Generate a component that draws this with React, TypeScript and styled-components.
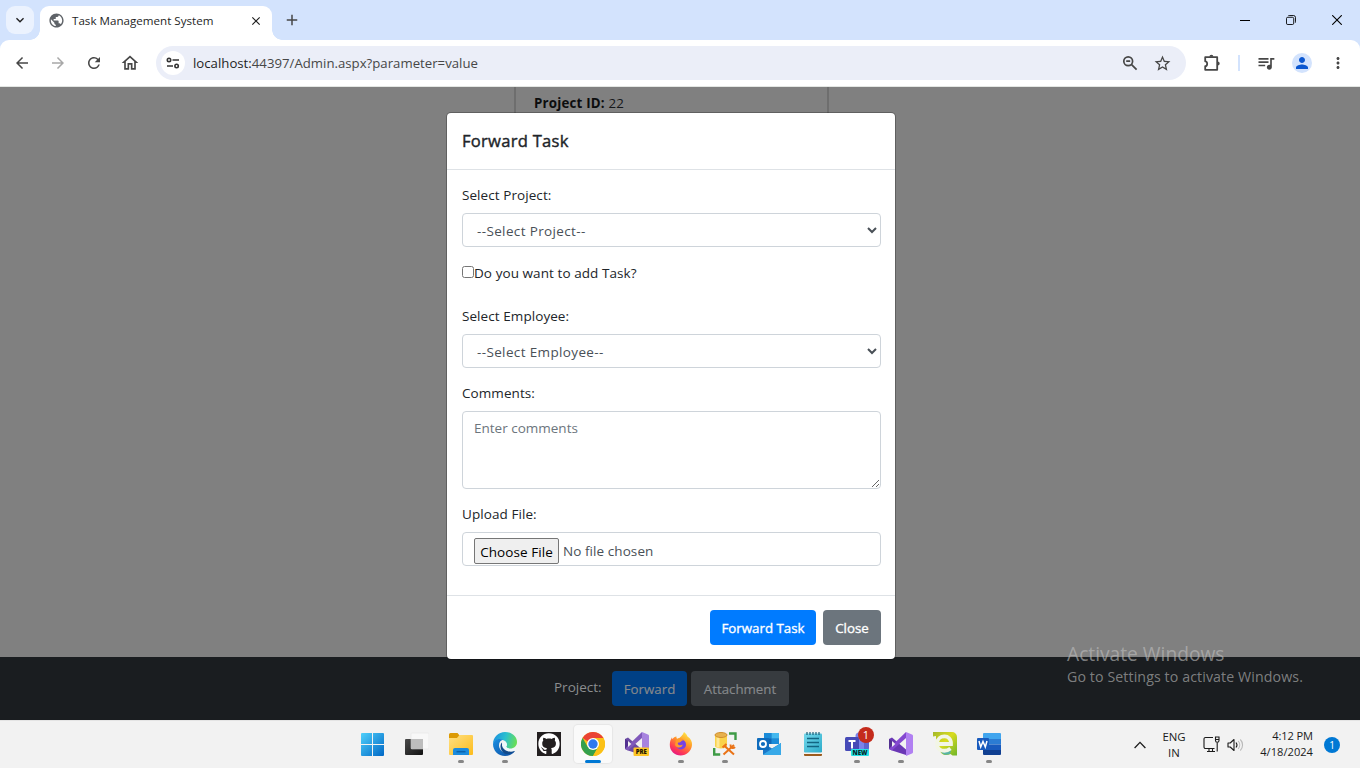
import React from "react";
import styled, { createGlobalStyle } from "styled-components";
import {
  MdAdd,
  MdArrowBack,
  MdArrowForward,
  MdClose,
  MdKeyboardArrowDown,
  MdMoreVert,
  MdOutlineHome,
  MdPerson,
  MdPublic,
  MdQueueMusic,
  MdRefresh,
  MdStarOutline,
} from "react-icons/md";
import { FaGithub } from "react-icons/fa";

const Global = createGlobalStyle`
  *, *::before, *::after { box-sizing: border-box; }
  body { margin: 0; overflow: hidden; font-family: "Open Sans", "Noto Sans", sans-serif; font-size: 13.5px; color: #212529; }
  svg { display: block; flex: none; }
  button, select, textarea, input { font: inherit; letter-spacing: inherit; margin: 0; }
`;

const Screen = styled.div`
  width: 1360px;
  height: 768px;
  display: flex;
  flex-direction: column;
  overflow: hidden;
  white-space: nowrap;
  background: #d3e3fd;
`;

/* ---------- browser ---------- */

const TabStrip = styled.div`
  height: 40px;
  flex: none;
  display: flex;
  align-items: flex-end;
  padding-left: 6px;
`;

const TabSearch = styled.div`
  width: 28px;
  height: 28px;
  margin: 0 6px 6px 0;
  border-radius: 9px;
  background: #ebf2fe;
  display: grid;
  place-items: center;
`;

const Tab = styled.div`
  position: relative;
  width: 232px;
  height: 34px;
  padding: 0 9px 5px 8px;
  border-radius: 9px 9px 0 0;
  background: #fff;
  display: flex;
  align-items: center;
  &::before,
  &::after {
    content: "";
    position: absolute;
    bottom: 0;
    width: 10px;
    height: 10px;
  }
  &::before {
    left: -10px;
    background: radial-gradient(circle at 0 0, transparent 9.5px, #fff 10px);
  }
  &::after {
    right: -10px;
    background: radial-gradient(circle at 100% 0, transparent 9.5px, #fff 10px);
  }
`;

const TabTitle = styled.span`
  flex: 1;
  margin-left: 7px;
  font-size: 11.6px;
  letter-spacing: 0.01px;
  color: #1f1f1f;
`;

const NewTab = styled.div`
  margin: 0 auto 11px 11px;
`;

const WindowButtons = styled.div`
  display: flex;
  height: 40px;
`;

const WindowButton = styled.div`
  width: 46px;
  height: 40px;
  display: grid;
  place-items: center;
`;

const Toolbar = styled.div`
  height: 46px;
  flex: none;
  display: flex;
  align-items: center;
  padding: 0 4px;
  border-radius: 9px 9px 0 0;
  background: #fff;
  color: #474747;
`;

const ToolButton = styled.div<{ $faded?: boolean }>`
  width: 36px;
  height: 34px;
  flex: none;
  display: grid;
  place-items: center;
  color: ${(p) => (p.$faded ? "#a8a8a8" : "#474747")};
`;

const AddressBar = styled.div`
  width: 1030px;
  height: 34px;
  flex: none;
  margin: 0 8px;
  padding: 0 8px 0 5px;
  border-radius: 17px;
  background: #ebeef8;
  display: flex;
  align-items: center;
`;

const SiteInfo = styled.div`
  width: 24px;
  height: 24px;
  border-radius: 50%;
  background: #fff;
  display: grid;
  place-items: center;
`;

const Url = styled.span`
  flex: 1;
  margin-left: 8px;
  font-size: 13.2px;
  letter-spacing: 0.01px;
  color: #474747;
  b {
    font-weight: 400;
    color: #1f1f1f;
  }
`;

const AddressAction = styled.div`
  width: 32px;
  display: grid;
  place-items: center;
`;

const Separator = styled.div`
  width: 2px;
  height: 16px;
  flex: none;
  margin: 0 8px;
  background: #d3e3fd;
`;

const Avatar = styled.div`
  width: 20px;
  height: 20px;
  border-radius: 50%;
  background: #d3e3fd;
  color: #0b57d0;
  display: grid;
  place-items: center;
`;

/* ---------- page ---------- */

const Page = styled.div`
  position: relative;
  flex: 1;
  display: flex;
  flex-direction: column;
  border-top: 1px solid #e3e6e3;
  background: #808080;
`;

const PageBody = styled.div`
  flex: 1;
`;

const ProjectCard = styled.div`
  width: 315px;
  height: 100%;
  margin-left: 514px;
  padding: 6px 18px;
  border: solid #6e6e6e;
  border-width: 0 2px;
  color: #15171a;
  line-height: 20px;
  font-size: 13.3px;
  letter-spacing: 0.2px;
  b {
    font-weight: 700;
    color: #0c0d0e;
  }
`;

const PageFooter = styled.div`
  height: 63px;
  flex: none;
  display: flex;
  align-items: flex-start;
  padding: 14px 0 0 554px;
  background: #1a1d20;
  color: #8b8d8f;
`;

const FooterLabel = styled.span`
  width: 58px;
  line-height: 32px;
`;

const tones = {
  primary: ["#007bff", "#fff"],
  secondary: ["#6c757d", "#fff"],
  dimPrimary: ["#004085", "#85888b"],
  dimSecondary: ["#373b3f", "#85888b"],
};

const Button = styled.button<{ $tone: keyof typeof tones; $width: number }>`
  width: ${(p) => p.$width}px;
  height: 35px;
  padding: 1px 0 0;
  border: 0;
  border-radius: 4px;
  font-size: 13.3px;
  -webkit-text-stroke: ${(p) => (p.$tone.startsWith("dim") ? 0.15 : 0.35)}px;
  background: ${(p) => tones[p.$tone][0]};
  color: ${(p) => tones[p.$tone][1]};
  text-align: center;
`;

const ButtonRow = styled.div<{ $gap: number }>`
  display: flex;
  gap: ${(p) => p.$gap}px;
`;

const Backdrop = styled.div`
  position: absolute;
  inset: 0;
  display: flex;
  justify-content: center;
  align-items: flex-start;
  padding: 26px 18px 0 0;
`;

const Modal = styled.div`
  width: 448px;
  height: 546px;
  display: flex;
  flex-direction: column;
  border-radius: 4px;
  background: #fff;
  box-shadow: 0 0 0 1px rgba(0, 0, 0, 0.25);
`;

const ModalHeader = styled.div`
  height: 57px;
  padding: 0 15px;
  border-bottom: 1px solid #dee2e6;
  font-size: 16.6px;
  letter-spacing: 0.25px;
  -webkit-text-stroke: 0.4px;
  line-height: 56px;
`;

const ModalBody = styled.div`
  flex: 1;
  padding: 14px 14px 0 15px;
  display: flex;
  flex-direction: column;
  letter-spacing: 0.07px;
`;

const ModalFooter = styled.div`
  height: 64px;
  padding: 14px 14px 0 0;
  border-top: 1px solid #dee2e6;
  display: flex;
  justify-content: flex-end;
`;

const Field = styled.label`
  display: flex;
  flex-direction: column;
  margin-bottom: 14px;
  line-height: 22px;
`;

const FieldLabel = styled.span`
  height: 29px;
`;

const Select = styled.select`
  height: 34px;
  padding: 1px 1px 0 10px;
  border: 1px solid #ced4da;
  border-radius: 4px;
  background: #fff;
  color: #495057;
  letter-spacing: 0.36px;
`;

const TextArea = styled.textarea`
  height: 78px;
  padding: 5px 11px;
  border: 1px solid #ced4da;
  border-radius: 4px;
  line-height: 22px;
  letter-spacing: 0;
  outline: 0;
  &::placeholder {
    color: #6c757d;
  }
`;

const FileInput = styled.div`
  height: 34px;
  padding: 5px 11px;
  border: 1px solid #ced4da;
  border-radius: 4px;
  display: flex;
  gap: 4px;
  color: #495057;
  line-height: 26px;
`;

const ChooseFile = styled.button`
  width: 85px;
  height: 26px;
  padding: 0 0 2px;
  border: 1px solid #767676;
  border-radius: 2px;
  background: #efefef;
  color: #000;
`;

const CheckRow = styled.label`
  height: 44px;
  display: flex;
  align-items: flex-start;
  line-height: 25px;
`;

const Checkbox = styled.input`
  width: 12px;
  height: 12px;
  margin: 5px 0 0;
`;

const Watermark = styled.div`
  position: absolute;
  left: 1067px;
  top: 554px;
  color: rgba(190, 190, 190, 0.62);
`;

const WatermarkTitle = styled.div`
  font-size: 19.2px;
  line-height: 25px;
`;

const WatermarkText = styled.div`
  font-size: 14.2px;
  letter-spacing: 0.1px;
  line-height: 22px;
`;

/* ---------- taskbar ---------- */

const Taskbar = styled.div`
  height: 48px;
  flex: none;
  display: flex;
  justify-content: space-between;
  padding-left: 351px;
  border-top: 1px solid #e4e4e4;
  background: #f2f2f2;
  color: #1b1b1b;
`;

const Apps = styled.div`
  display: flex;
`;

const TaskButton = styled.div<{ $state?: "open" | "active" }>`
  position: relative;
  width: 38px;
  height: 38px;
  margin: 4px 3px;
  border-radius: 4px;
  display: grid;
  place-items: center;
  background: ${(p) => (p.$state === "active" ? "#fafafa" : "transparent")};
  box-shadow: ${(p) => (p.$state === "active" ? "0 0 1px 1px #e6e6e6" : "none")};
  &::after {
    content: "";
    position: absolute;
    bottom: 0;
    left: 50%;
    width: ${(p) => (p.$state === "active" ? 16 : 6)}px;
    height: 3px;
    border-radius: 2px;
    transform: translateX(-50%);
    display: ${(p) => (p.$state ? "block" : "none")};
    background: ${(p) => (p.$state === "active" ? "#0078d4" : "#868686")};
  }
`;

const CountBadge = styled.span`
  position: absolute;
  left: 20px;
  top: 2px;
  width: 16px;
  height: 16px;
  border-radius: 50%;
  background: #c42b1c;
  color: #fff;
  font-size: 11px;
  line-height: 15px;
  text-align: center;
`;

const Tray = styled.div`
  display: flex;
  align-items: center;
  padding-right: 20px;
`;

const Language = styled.div`
  width: 30px;
  margin: 0 14px 0 13px;
  font-size: 11.4px;
  line-height: 16px;
  text-align: center;
`;

const Clock = styled.div`
  width: 64px;
  margin: 0 11px 2px 5px;
  font-size: 11.1px;
  line-height: 16px;
  letter-spacing: 0.03px;
  display: flex;
  flex-direction: column;
  align-items: flex-end;
`;

const ClockTime = styled.span`
  letter-spacing: -0.1px;
`;

const Notice = styled.div`
  width: 16px;
  height: 16px;
  border-radius: 50%;
  background: #0078d4;
  color: #fff;
  font-size: 10px;
  line-height: 16px;
  text-align: center;
`;

/* ---------- drawings ---------- */

const TuneIcon = () => (
  <svg width="14" height="12" viewBox="0 0 14 12" fill="none" stroke="#333" strokeWidth="1.6">
    <circle cx="3" cy="3" r="1.7" />
    <path d="M6.5 3H13M1 9h6" />
    <circle cx="10.6" cy="9" r="1.7" />
  </svg>
);

const ZoomOutIcon = () => (
  <svg width="16" height="16" viewBox="0 0 16 16" fill="none" stroke="#474747" strokeWidth="1.7">
    <circle cx="6.2" cy="6.2" r="4.4" />
    <path d="M9.6 9.6l5 5M4.2 6.2h4" />
  </svg>
);

const PuzzleIcon = () => (
  <svg width="18" height="18" viewBox="0 0 18 18" fill="none" stroke="#474747" strokeWidth="1.8" strokeLinejoin="round">
    <path d="M2.2 3.2h12v12.6h-12v-3.6c2.6 0 2.6-4.9 0-4.9z" />
    <path d="M6.4 2.8a2 2 0 0 1 4 0zM14.6 7.4a2 2 0 0 1 0 4.2z" fill="#474747" stroke="none" />
  </svg>
);

const MinimizeIcon = () => (
  <svg width="10" height="10" viewBox="0 0 10 10" stroke="#000">
    <path d="M0 5.5h10" />
  </svg>
);

const RestoreIcon = () => (
  <svg width="10" height="10" viewBox="0 0 11 11" fill="none" stroke="#000">
    <rect x="0.5" y="2.5" width="8" height="8" rx="1.5" />
    <path d="M2.5 .8c.4-.3.7-.3 1-.3h4.500a2.500 2.500 0 0 1 2.500 2.500v4.500c0 .4 0 .7-.3 1" />
  </svg>
);

const CloseWindowIcon = () => (
  <svg width="10" height="10" viewBox="0 0 10 10" stroke="#000" strokeWidth="1.1">
    <path d="M.2.2l9.600 9.600M9.800.2l-9.600 9.600" />
  </svg>
);

const WindowsIcon = () => (
  <svg width="24" height="24" viewBox="0 0 24 24">
    <defs>
      <linearGradient id="win" x1="0" y1="0" x2="1" y2="1">
        <stop offset="0" stopColor="#4fd0fb" />
        <stop offset="1" stopColor="#0067c5" />
      </linearGradient>
    </defs>
    <path fill="url(#win)" d="M1 1h10v11H0V2a1 1 0 0 1 1-1zM12 1h10a1 1 0 0 1 1 1v10H12zM0 13h11v11H1a1 1 0 0 1-1-1zM12 13h11v10a1 1 0 0 1-1 1H12z" />
  </svg>
);

const TaskViewIcon = () => (
  <svg width="24" height="24" viewBox="0 0 24 24">
    <defs>
      <linearGradient id="tv" x1="0" y1="0" x2="1" y2="1">
        <stop offset="0" stopColor="#4a4a4a" />
        <stop offset="1" stopColor="#111" />
      </linearGradient>
    </defs>
    <rect x="0" y="7" width="18" height="16" rx="1" fill="url(#tv)" />
    <rect x="6" y="1" width="18" height="16" rx="1" fill="#f8f8f8" stroke="#e2e2e2" strokeWidth=".5" />
    <path d="M6 7h12v10H7a1 1 0 0 1-1-1z" fill="#bdbdbd" />
  </svg>
);

const FolderIcon = () => (
  <svg width="24" height="24" viewBox="0 0 24 24">
    <defs>
      <linearGradient id="fold" x1="0" y1="0" x2="1" y2="1">
        <stop offset="0" stopColor="#ffe083" />
        <stop offset="1" stopColor="#fdbc1c" />
      </linearGradient>
    </defs>
    <path d="M0 2.500A1.500 1.500 0 0 1 1.500 1h7L11 4v4H0z" fill="#dc9a05" />
    <path d="M0 6h8l2.500-3H23a1 1 0 0 1 1 1v18a1 1 0 0 1-1 1H1a1 1 0 0 1-1-1z" fill="url(#fold)" />
    <path d="M4 23v-5a2 2 0 0 1 2-2h12a2 2 0 0 1 2 2v5z" fill="#1c8bdd" />
    <path d="M7.500 19.700h9" stroke="#0b62ad" strokeWidth="1.500" />
  </svg>
);

const EdgeIcon = () => (
  <svg width="24" height="24" viewBox="0 0 24 24">
    <defs>
      <linearGradient id="edgeTop" x1="0" y1=".3" x2="1" y2=".5">
        <stop offset="0" stopColor="#1c91e0" />
        <stop offset=".5" stopColor="#2bc0cf" />
        <stop offset="1" stopColor="#69df55" />
      </linearGradient>
      <linearGradient id="edgeLow" x1="0" y1="0" x2="1" y2="1">
        <stop offset="0" stopColor="#1a8fe3" />
        <stop offset="1" stopColor="#0c4a9d" />
      </linearGradient>
    </defs>
    <path d="M0 12C0 5 5.400 0 12 0c7.500 0 12 5 12 10 0 4-3 6.500-6.500 6.500-3 0-4.700-1.200-4.300-2 1.300-1.500 1-5-2.700-6.300C6 6.500 1.500 8 0 12z" fill="url(#edgeTop)" />
    <path d="M0 12c.8-4.500 6.500-6.400 10-4.200-3 .7-5 4-3.500 8.200 2 5 8 6.500 15.500 3C19.500 22.500 16 24 12 24 5 24 0 18.500 0 12z" fill="url(#edgeLow)" />
    <path d="M9 10.500c-2.500 2.500-2 8.500 2.500 11 4 1.500 8-.2 10.500-2.500-6 2.300-12-1-13-5.200z" fill="#114a8b" />
    <path d="M10.500 9.500c-2.500 4 .5 9.300 6.500 9.500 2.500 0 4-.5 5.300-1.300l1-2.200C20 18 13 17 13.200 14.500c1.300-1.500 1-4-2.700-5z" fill="#eef8fc" />
  </svg>
);

const GithubTile = styled.div`
  width: 24px;
  height: 24px;
  background: #231f20;
  color: #fff;
  display: grid;
  place-items: center;
`;

const ChromeIcon = () => (
  <svg width="24" height="24" viewBox="0 0 24 24">
    <circle cx="12" cy="12" r="12" fill="#fbc116" />
    <path d="M1.600 6A12 12 0 0 1 22.400 6H12v7z" fill="#ea4335" />
    <path d="M1.600 6A12 12 0 0 0 12 24l5.200-9L12 12 6.800 15z" fill="#34a04c" />
    <path d="M12 6h10.400A12 12 0 0 1 12 24l5.200-9z" fill="#fbc116" />
    <circle cx="12" cy="12" r="6" fill="#fff" />
    <circle cx="12" cy="12" r="4.700" fill="#2f78ee" />
  </svg>
);

const VisualStudioIcon = ({ pre }: { pre?: boolean }) => (
  <svg width="24" height="24" viewBox="0 0 24 24">
    <path d="M0 7l3-1.500L17 17.500V23L3 18.500 0 17z" fill={pre ? "#6b4ba3" : "#6a37b5"} />
    <path d="M0 17V7l3 2v6.500z" fill="#52318f" />
    <path d="M0 17l3 1.500L17 6V0L3.500 13z" fill={pre ? "#8059bb" : "#8448d0"} />
    <path d="M17 0l6 2.500a1.500 1.500 0 0 1 1 1.500v16a1.500 1.500 0 0 1-1 1.500L17 24z" fill={pre ? "#a783df" : "#b180f2"} />
    <path d="M3 9l3.300 3L3 15z" fill="#f2f2f2" />
    <path d="M17 7.500L11.500 12l5.500 4.500z" fill="#f2f2f2" />
    {pre && (
      <>
        <rect x="8.500" y="15.500" width="15.500" height="8.500" rx="1" fill="#fdc526" />
        <text x="16.300" y="22.400" fontSize="6" fontWeight="800" textAnchor="middle" fill="#1c1600">PRE</text>
      </>
    )}
  </svg>
);

const FirefoxIcon = () => (
  <svg width="24" height="24" viewBox="0 0 24 24">
    <defs>
      <linearGradient id="ff" x1=".8" y1="0" x2=".25" y2="1">
        <stop offset="0" stopColor="#fff04a" />
        <stop offset=".4" stopColor="#ff9b28" />
        <stop offset=".75" stopColor="#ff3d52" />
        <stop offset="1" stopColor="#e31587" />
      </linearGradient>
    </defs>
    <path d="M15 0c2 1.500 3 3 3.500 4.500C22 6.500 23.300 10 23 13c-.5 6-5.500 10.500-11.300 10.500S.5 19 .8 12.500C.8 9 2 7 3 5.200c0 1 .2 1.500.6 1.900C4.500 5.500 6 4.700 7.500 4.600c-.3 1 .2 2 .8 2.500C11 6 14 3 15 0z" fill="url(#ff)" />
    <circle cx="12" cy="12.500" r="5" fill="#7542e5" />
    <path d="M7 7.500c3-2 6-1.500 8 .8-2-.3-2 .7-3.500 1.700-1.500.8-2.500.2-2.800 1.500.7 2.500 4 2 5 .8C13.500 16 8 17 6 13z" fill="#ff9b28" />
  </svg>
);

const DatabaseToolIcon = () => (
  <svg width="24" height="24" viewBox="0 0 24 24">
    <path d="M16 1.500h6.500V8M1.200 16v6.500h6" stroke="#3e9b46" strokeWidth="2.400" fill="none" />
    <path d="M2 3.500h12v11c-2 2.500-10 2.500-12 0z" fill="#fad24a" />
    <path d="M5 5v10.500" stroke="#ffe895" strokeWidth="3" />
    <ellipse cx="8" cy="3" rx="6" ry="2.500" fill="#e7b14d" stroke="#d08d2c" />
    <path d="M11 13.500l10 9M21 13l-10.500 9.500" stroke="#ea7317" strokeWidth="2" />
    <path d="M9.500 15.500l4-3.500M17.500 12.500c-.2 3.500 2.500 4.500 4.500 2.500" stroke="#ea7317" strokeWidth="2" fill="none" />
  </svg>
);

const OutlookIcon = () => (
  <svg width="24" height="24" viewBox="0 0 24 24">
    <path d="M7 1h15v11H7z" fill="#1066b5" />
    <path d="M7 1h7.500v5.500H7zM14.500 6.500H22V12h-7.500z" fill="#1b8bd8" />
    <path d="M14.500 1H22v5.500h-7.500z" fill="#45b8ee" />
    <path d="M6 11l9 5.500 9-5.500v11a1 1 0 0 1-1 1H7a1 1 0 0 1-1-1z" fill="#1b78c8" />
    <path d="M6 22.500L24 11v11a1 1 0 0 1-1 1H7z" fill="#38a9e8" />
    <rect x="0" y="6" width="12" height="12" rx="1" fill="#0f6cbd" />
    <circle cx="6" cy="12" r="3" fill="none" stroke="#fff" strokeWidth="1.800" />
  </svg>
);

const NotepadIcon = () => (
  <svg width="24" height="24" viewBox="0 0 24 24">
    <defs>
      <linearGradient id="note" x1="0" y1="0" x2="1" y2="1">
        <stop offset="0" stopColor="#75d9ec" />
        <stop offset="1" stopColor="#2cabc9" />
      </linearGradient>
    </defs>
    <rect x="3" y="18" width="18" height="6" rx="1" fill="#9c5b1e" />
    <rect x="3" y="20" width="18" height="2" fill="#f6f3ef" />
    <rect x="3" y="1.500" width="18" height="19" rx="1" fill="url(#note)" />
    <path d="M6 0v3M9 0v3M12 0v3M15 0v3M18 0v3" stroke="#19607a" strokeWidth="1.200" />
    <path d="M6 6.500h12M6 10.500h12M6 14.500h12" stroke="#126582" strokeWidth="1.500" />
  </svg>
);

const TeamsIcon = () => (
  <svg width="24" height="24" viewBox="0 0 24 24">
    <circle cx="14" cy="4" r="3.500" fill="#7b83eb" />
    <path d="M14 7h10v9a5 5 0 0 1-5 5h-5z" fill="#5d66cf" />
    <path d="M8 7h11v10a6 6 0 0 1-11 3z" fill="#7b83eb" />
    <rect x="0" y="5" width="14" height="14" rx="1.500" fill="#464ab7" />
    <path d="M3.500 9h7M7 9v7.500" stroke="#fff" strokeWidth="2" />
    <rect x="6" y="17" width="18" height="7" rx="1" fill="#26e1e6" />
    <text x="15" y="22.800" fontSize="6.200" fontWeight="800" textAnchor="middle" fill="#06292b">NEW</text>
  </svg>
);

const LeafEIcon = () => (
  <svg width="24" height="24" viewBox="0 0 24 24">
    <defs>
      <linearGradient id="leaf" x1="0" y1="0" x2="1" y2="1">
        <stop offset="0" stopColor="#a3b82a" />
        <stop offset=".45" stopColor="#d9dc1f" />
        <stop offset="1" stopColor="#6fb52b" />
      </linearGradient>
    </defs>
    <path d="M0 0h19a5 5 0 0 1 5 5v18.500h-4.500L17.500 22C13 24 7.500 23 7 18L3 14V4L0 4.500z" fill="url(#leaf)" />
    <path d="M7.500 17c4 4 8 3 11 0l-1.500 5c-4 1.500-9 1-9.500-5z" fill="#58b4a4" />
    <path d="M5 12h13C18.500 1.500 4.500 2.500 4 11.500c-.2 8.500 9 8.500 13.500 5" fill="none" stroke="#f2f5e6" strokeWidth="3.800" />
  </svg>
);

const WordIcon = () => (
  <svg width="24" height="24" viewBox="0 0 24 24">
    <path d="M6 2a1 1 0 0 1 1-1h16a1 1 0 0 1 1 1v5H6z" fill="#41a5ee" />
    <path d="M6 7h18v5.500H6z" fill="#2b7cd3" />
    <path d="M6 12.500h18V18H6z" fill="#185abd" />
    <path d="M6 18h18v4a1 1 0 0 1-1 1H7a1 1 0 0 1-1-1z" fill="#103f91" />
    <rect x="0" y="6" width="12" height="12" rx="1" fill="#185abd" />
    <path d="M2 9l1.700 6L6 9.500 8.300 15 10 9" fill="none" stroke="#fff" strokeWidth="1.500" />
  </svg>
);

const ChevronUpIcon = () => (
  <svg width="12" height="8" viewBox="0 0 12 8" fill="none" stroke="#1b1b1b" strokeWidth="1.300">
    <path d="M.6 7L6 1.400 11.400 7" />
  </svg>
);

const NetworkIcon = () => (
  <svg width="17" height="17" viewBox="0 0 17 17" fill="none" stroke="#1b1b1b" strokeWidth="1.100">
    <path d="M10 1.500H2.500a1.500 1.500 0 0 0-1.500 1.500v8a1.500 1.500 0 0 0 1.500 1.500h9M4 15.500h8M6 12.500v3M9.500 12.500v3M14.200 6.500V15.500" />
    <path d="M12.500 1h3.500v3.500a1.700 1.700 0 0 1-3.500 0zM12.500 3.500H16" />
  </svg>
);

const SpeakerWrap = styled.div`
  margin-left: 7px;
`;

const SpeakerIcon = () => (
  <svg width="17" height="16" viewBox="0 0 17 16" fill="none" stroke="#1b1b1b" strokeWidth="1.100">
    <path d="M1 6h2.200L7 2.500v11L3.200 10H1z" strokeLinejoin="round" />
    <path d="M9 5.500c1.200 1.500 1.200 3.500 0 5" />
    <path d="M11.200 4c2 2.300 2 5.700 0 8M13.300 2.500c3 3 3 8 0 11" stroke="#b9b9b9" />
  </svg>
);

export default function App() {
  return (
    <Screen>
      <Global />
      <TabStrip>
        <TabSearch><MdKeyboardArrowDown size={16} color="#1f1f1f" /></TabSearch>
        <Tab>
          <MdPublic size={17} color="#5f6368" />
          <TabTitle>Task Management System</TabTitle>
          <MdClose size={14} color="#1f1f1f" />
        </Tab>
        <NewTab><MdAdd size={18} color="#474747" /></NewTab>
        <WindowButtons>
          <WindowButton><MinimizeIcon /></WindowButton>
          <WindowButton><RestoreIcon /></WindowButton>
          <WindowButton><CloseWindowIcon /></WindowButton>
        </WindowButtons>
      </TabStrip>
      <Toolbar>
        <ToolButton><MdArrowBack size={18} /></ToolButton>
        <ToolButton $faded><MdArrowForward size={18} /></ToolButton>
        <ToolButton><MdRefresh size={18} /></ToolButton>
        <ToolButton><MdOutlineHome size={20} /></ToolButton>
        <AddressBar>
          <SiteInfo><TuneIcon /></SiteInfo>
          <Url><b>localhost:</b>44397/Admin.aspx?parameter=value</Url>
          <AddressAction><ZoomOutIcon /></AddressAction>
          <AddressAction><MdStarOutline size={19} /></AddressAction>
        </AddressBar>
        <ToolButton><PuzzleIcon /></ToolButton>
        <Separator />
        <ToolButton><MdQueueMusic size={20} /></ToolButton>
        <ToolButton><Avatar><MdPerson size={18} /></Avatar></ToolButton>
        <ToolButton><MdMoreVert size={18} /></ToolButton>
      </Toolbar>
      <Page>
        <PageBody>
          <ProjectCard><b>Project ID:</b> 22</ProjectCard>
        </PageBody>
        <PageFooter>
          <FooterLabel>Project:</FooterLabel>
          <ButtonRow $gap={4}>
            <Button $tone="dimPrimary" $width={75}>Forward</Button>
            <Button $tone="dimSecondary" $width={98}>Attachment</Button>
          </ButtonRow>
        </PageFooter>
        <Backdrop>
          <Modal>
            <ModalHeader>Forward Task</ModalHeader>
            <ModalBody>
              <Field>
                <FieldLabel>Select Project:</FieldLabel>
                <Select><option>--Select Project--</option></Select>
              </Field>
              <CheckRow><Checkbox type="checkbox" />Do you want to add Task?</CheckRow>
              <Field>
                <FieldLabel>Select Employee:</FieldLabel>
                <Select><option>--Select Employee--</option></Select>
              </Field>
              <Field>
                <FieldLabel>Comments:</FieldLabel>
                <TextArea placeholder="Enter comments" />
              </Field>
              <Field as="div">
                <FieldLabel>Upload File:</FieldLabel>
                <FileInput><ChooseFile>Choose File</ChooseFile>No file chosen</FileInput>
              </Field>
            </ModalBody>
            <ModalFooter>
              <ButtonRow $gap={7}>
                <Button $tone="primary" $width={106}>Forward Task</Button>
                <Button $tone="secondary" $width={58}>Close</Button>
              </ButtonRow>
            </ModalFooter>
          </Modal>
        </Backdrop>
        <Watermark>
          <WatermarkTitle>Activate Windows</WatermarkTitle>
          <WatermarkText>Go to Settings to activate Windows.</WatermarkText>
        </Watermark>
      </Page>
      <Taskbar>
        <Apps>
          <TaskButton><WindowsIcon /></TaskButton>
          <TaskButton><TaskViewIcon /></TaskButton>
          <TaskButton $state="open"><FolderIcon /></TaskButton>
          <TaskButton $state="open"><EdgeIcon /></TaskButton>
          <TaskButton><GithubTile><FaGithub size={22} /></GithubTile></TaskButton>
          <TaskButton $state="active"><ChromeIcon /></TaskButton>
          <TaskButton><VisualStudioIcon pre /></TaskButton>
          <TaskButton $state="open"><FirefoxIcon /></TaskButton>
          <TaskButton $state="open"><DatabaseToolIcon /></TaskButton>
          <TaskButton><OutlookIcon /></TaskButton>
          <TaskButton><NotepadIcon /></TaskButton>
          <TaskButton $state="open"><TeamsIcon /><CountBadge>1</CountBadge></TaskButton>
          <TaskButton $state="open"><VisualStudioIcon /></TaskButton>
          <TaskButton><LeafEIcon /></TaskButton>
          <TaskButton $state="open"><WordIcon /></TaskButton>
        </Apps>
        <Tray>
          <ChevronUpIcon />
          <Language>ENG<br />IN</Language>
          <NetworkIcon />
          <SpeakerWrap><SpeakerIcon /></SpeakerWrap>
          <Clock><ClockTime>4:12 PM</ClockTime><span>4/18/2024</span></Clock>
          <Notice>1</Notice>
        </Tray>
      </Taskbar>
    </Screen>
  );
}
